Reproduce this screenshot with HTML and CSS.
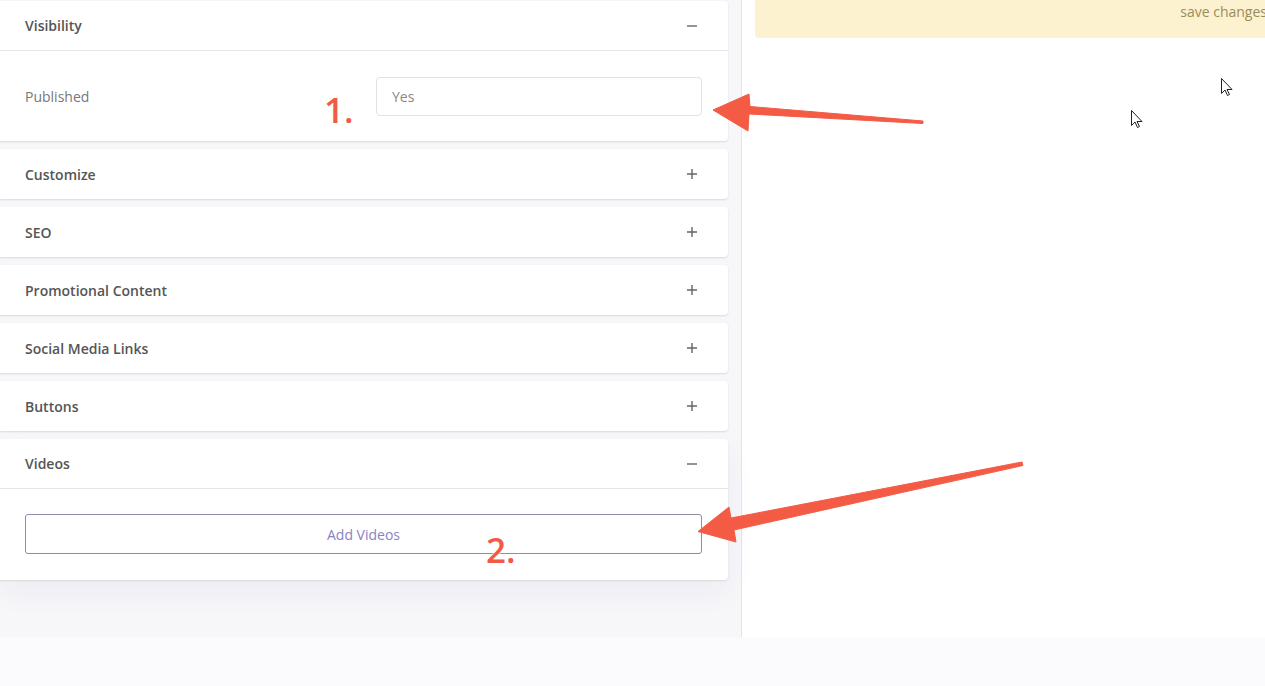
FILE: index.html
```html
<!DOCTYPE html>
<html lang="en">
  <head>
    <meta charset="UTF-8" />
    <meta name="viewport" content="width=device-width, initial-scale=1.0" />
    <title>Edit Page</title>
    <link rel="stylesheet" href="styles.css">
  </head>
  <body>
    <div class="layout">
      <aside class="sidebar">
        <div class="card open">
          <div class="card-header">
            <span>Visibility</span>
            <svg class="toggle" viewBox="0 0 12 12"><path d="M1 6h10" /></svg>
          </div>
          <div class="card-body row">
            <span class="label">Published</span>
            <div class="field">Yes</div>
          </div>
        </div>
        <div class="card">
          <div class="card-header">
            <span>Customize</span>
            <svg class="toggle" viewBox="0 0 12 12"><path d="M1 6h10M6 1v10" /></svg>
          </div>
        </div>
        <div class="card">
          <div class="card-header">
            <span>SEO</span>
            <svg class="toggle" viewBox="0 0 12 12"><path d="M1 6h10M6 1v10" /></svg>
          </div>
        </div>
        <div class="card">
          <div class="card-header">
            <span>Promotional Content</span>
            <svg class="toggle" viewBox="0 0 12 12"><path d="M1 6h10M6 1v10" /></svg>
          </div>
        </div>
        <div class="card">
          <div class="card-header">
            <span>Social Media Links</span>
            <svg class="toggle" viewBox="0 0 12 12"><path d="M1 6h10M6 1v10" /></svg>
          </div>
        </div>
        <div class="card">
          <div class="card-header">
            <span>Buttons</span>
            <svg class="toggle" viewBox="0 0 12 12"><path d="M1 6h10M6 1v10" /></svg>
          </div>
        </div>
        <div class="card open last">
          <div class="card-header">
            <span>Videos</span>
            <svg class="toggle" viewBox="0 0 12 12"><path d="M1 6h10" /></svg>
          </div>
          <div class="card-body">
            <button class="add-btn">Add Videos</button>
          </div>
        </div>
      </aside>

      <main class="main">
        <div class="notice">save changes</div>
      </main>
    </div>

    <!-- annotations drawn over the screenshot -->
    <span class="step step-1">1.</span>
    <span class="step step-2">2.</span>
    <svg class="overlay" width="1265" height="686" viewBox="0 0 1265 686">
      <polygon class="arrow" points="713,110 749,94 750,106.5 923,121 923,123.5 749,114 748,131" />
      <polygon class="arrow" points="698,531.5 729,507 731,518 1022,462 1023,465.5 734,530 736,542" />
      <path class="cursor" d="M1221.5 78.5v15l3.5-3.5 2.5 5.5 2-1-2.5-5h5z" />
      <path class="cursor" d="M1131.5 110.5v15l3.5-3.5 2.5 5.5 2-1-2.5-5h5z" />
    </svg>
  </body>
</html>
```

FILE: styles.css
```css
body {
  margin: 0;
  font-family: "Open Sans", "Lato", sans-serif;
  font-size: 14px;
  color: #555;
  background-color: #fbfbfd;
  overflow: hidden;
  height: 686px;
  position: relative;
}
.layout {
  display: flex;
  height: 637px;
  background-color: #fff;
}
.sidebar {
  width: 742px;
  flex-shrink: 0;
  box-sizing: border-box;
  padding-top: 1px;
  border-right: 1px solid #e4e4ea;
  background-color: #f7f7fa;
}
.card {
  width: 728px;
  background-color: #fff;
  border-radius: 0 4px 4px 0;
  box-shadow: 0 1px 2px rgba(0, 0, 0, 0.12);
  margin-bottom: 8px;
}
.card.last {
  box-shadow: 0 1px 2px rgba(0, 0, 0, 0.1), 0 12px 30px rgba(40, 40, 80, 0.05);
}
.card-header {
  height: 50px;
  box-sizing: border-box;
  padding: 0 30px 0 25px;
  display: flex;
  align-items: center;
  justify-content: space-between;
  font-weight: 600;
  color: #555;
}
.card.open .card-header {
  border-bottom: 1px solid #e6e6e6;
}
.toggle {
  width: 12px;
  height: 12px;
  fill: none;
  stroke: #666;
  stroke-width: 1.4;
}
.card-body {
  padding: 26px 26px 25px 25px;
}
.card.last .card-body {
  padding: 25px 26px 26px 25px;
}
.row {
  display: flex;
  align-items: center;
  justify-content: space-between;
}
.label {
  color: #777;
}
.field {
  width: 326px;
  height: 39px;
  box-sizing: border-box;
  border: 1px solid #e2e2e4;
  border-radius: 4px;
  padding: 0 15px;
  display: flex;
  align-items: center;
  color: #888;
}
.add-btn {
  display: block;
  width: 100%;
  height: 40px;
  border: 1px solid #8e8ca6;
  border-radius: 3px;
  background-color: #fff;
  font-family: "Open Sans", "Lato", sans-serif;
  font-size: 14px;
  color: #8784c2;
  cursor: pointer;
}
.main {
  flex: 1;
  padding-left: 13px;
}
.notice {
  height: 38px;
  box-sizing: border-box;
  margin-right: -2px;
  padding-top: 3px;
  line-height: 18px;
  text-align: right;
  background-color: #fdf2cf;
  border-radius: 0 0 0 4px;
  color: #9a8b5e;
}
.step {
  position: absolute;
  font-family: "Open Sans", sans-serif;
  font-weight: 600;
  font-size: 35px;
  line-height: 1;
  color: #f25a45;
  text-shadow: 0 0 2px #fff, 0 0 2px #fff;
}
.step-1 {
  left: 324px;
  top: 92px;
}
.step-2 {
  left: 486px;
  top: 532px;
}
.overlay {
  position: absolute;
  left: 0;
  top: 0;
  pointer-events: none;
}
.arrow {
  fill: #f45b45;
  stroke: #f45b45;
  stroke-width: 1;
  stroke-linejoin: round;
}
.cursor {
  fill: #fff;
  stroke: #222;
  stroke-width: 1;
  stroke-linejoin: round;
}
```
